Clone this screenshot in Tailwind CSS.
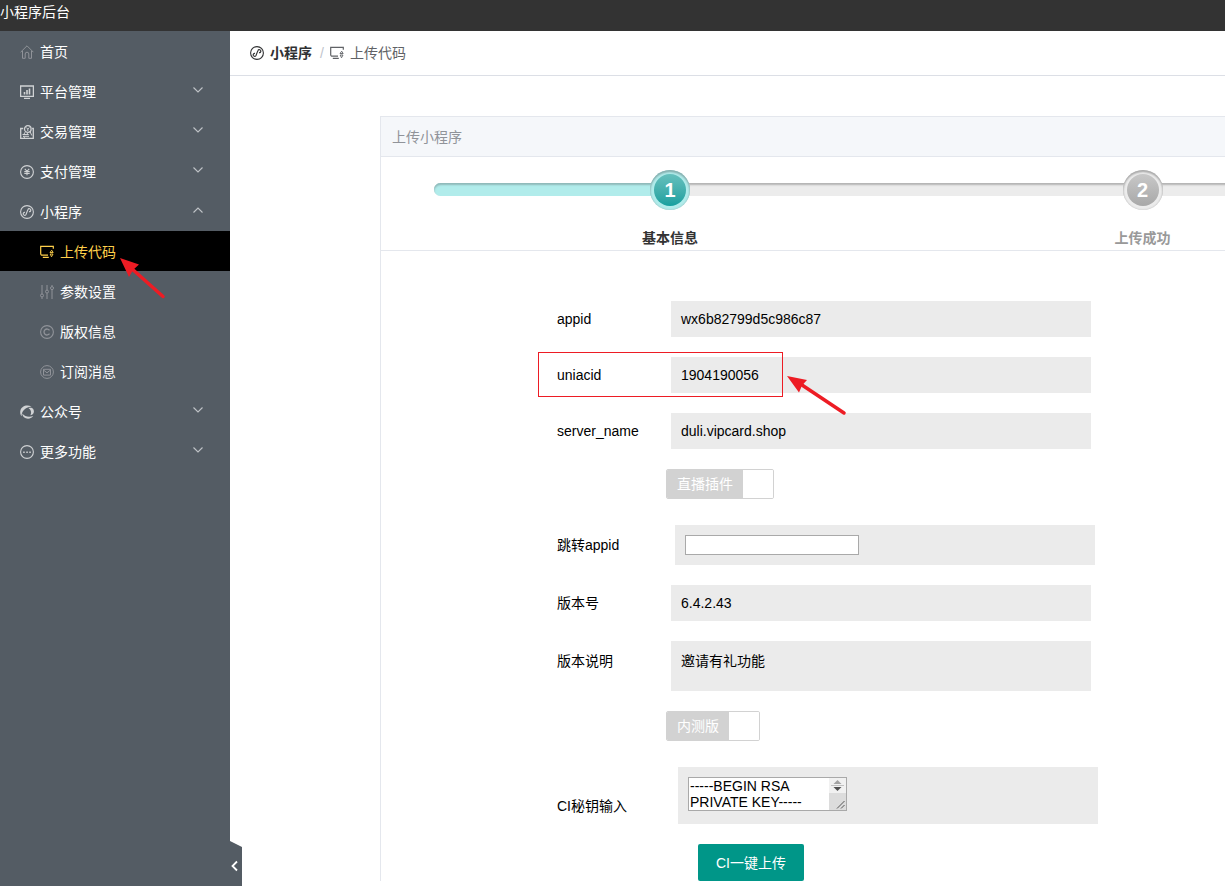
<!DOCTYPE html>
<html lang="zh-CN">
<head>
<meta charset="utf-8">
<meta name="viewport" content="width=device-width, initial-scale=1">
<title>小程序后台</title>
<script src="https://cdn.jsdelivr.net/npm/@tailwindcss/browser@4"></script>
</head>
<body class="relative flex h-screen flex-col overflow-hidden bg-white font-['Liberation_Sans','Noto_Sans_CJK_SC',sans-serif] text-sm leading-4 text-black">
<svg class="hidden" aria-hidden="true">
  <defs>
    <symbol id="home" viewBox="0 0 14 14"><path d="M.6 7.200 7 .8l6.400 6.400M2.500 6v7.300H5.200V9a1.800 1.800 0 0 1 3.600 0v4.300h2.700V6" fill="none" stroke="currentColor"/></symbol>
    <symbol id="chart" viewBox="0 0 14 14"><path d="M.6 1h12.800v10.400H.6zM4 13.300h6" fill="none" stroke="currentColor" stroke-width="1.300"/><path d="M4.500 9.500V7M7 9.500V5M9.500 9.500V3.500" stroke="currentColor" stroke-width="1.600"/></symbol>
    <symbol id="trade" viewBox="0 0 14 14"><path d="M3.200 3.500H.7v9.800h12.600V3.500h-1.200" fill="none" stroke="currentColor" stroke-width="1.300"/><circle cx="7.800" cy="4" r="3.300" fill="none" stroke="currentColor" stroke-width="1.300"/><path d="m6.300 2.500 1.500 1.600 1.500-1.600M7.800 4v2M10 6.500l1.800 4M5.300 7 4 9M2.500 9.500h6l-2-1.700M9 11.300H3l2 1.300" fill="none" stroke="currentColor"/></symbol>
    <symbol id="pay" viewBox="0 0 14 14"><circle cx="7" cy="7" r="6.400" fill="none" stroke="currentColor" stroke-width="1.100"/><path d="m4.800 3.900 2.200 2.400 2.200-2.400M4.300 6.500h5.400M4.300 8.400h5.400M7 6.300v4" fill="none" stroke="currentColor" stroke-width="1.100"/></symbol>
    <symbol id="mini" viewBox="0 0 14 14"><circle cx="7" cy="7" r="6.400" fill="none" stroke="currentColor" stroke-width="1.100"/><path d="M5 7.400A1.500 1.500 0 1 0 6.100 9.300C6.500 8 7.300 6.200 7.900 4.700A1.500 1.500 0 1 1 9 6.600" fill="none" stroke="currentColor" stroke-width="1.100"/></symbol>
    <symbol id="upload" viewBox="0 0 14 14"><path d="M8 10.200H2.200A1.400 1.400 0 0 1 .7 8.800V1.300h12.600v2.500M2.800 12.400h6" fill="none" stroke="currentColor" stroke-width="1.200"/><path d="M11.700 5.200 10 7.500h3.200zM10.200 9h2.800l-1.500 2.800z" fill="none" stroke="currentColor" stroke-width=".9"/></symbol>
    <symbol id="sliders" viewBox="0 0 14 14"><path d="M2 0v9M2 12.200V14M7 0v5M7 8.200V14M12 0v1.500M12 4.700V14" stroke="currentColor"/><g fill="none" stroke="currentColor"><circle cx="2" cy="10.500" r="1.500"/><circle cx="7" cy="6.600" r="1.500"/><circle cx="12" cy="3.100" r="1.500"/></g></symbol>
    <symbol id="copy" viewBox="0 0 14 14"><circle cx="7" cy="7" r="6.400" fill="none" stroke="currentColor" stroke-width="1.100"/><path d="M9.500 5.300a3 3 0 1 0 0 3.400" fill="none" stroke="currentColor" stroke-width="1.300"/></symbol>
    <symbol id="mail" viewBox="0 0 14 14"><circle cx="7" cy="7" r="6.400" fill="none" stroke="currentColor"/><path d="M3.500 4.300h7v5.800h-7zM3.500 5 7 7.800 10.500 5" fill="none" stroke="currentColor"/></symbol>
    <symbol id="swirl" viewBox="0 0 14 14"><g fill="currentColor"><path d="M11.500 1.600C7 -.8 1.200 1 .3 6c-.3 2 .2 3.800 1.300 5.200C1.700 6.500 4.500 2.800 11.500 1.600z"/><path d="M2.300 8.500c0 4.200 5 6.600 9 4.300.8-.5 1.400-1.100 1.900-1.800-4.500 1.500-8 .7-10.900-2.500z"/><path d="M8.500 3.200c2.500 1.300 3.300 4.300 1.900 7 3.300-.6 4.400-3.600 2.800-6.200-1-1.300-2.900-1.600-4.700-.8z"/></g></symbol>
    <symbol id="more" viewBox="0 0 14 14"><circle cx="7" cy="7" r="6.400" fill="none" stroke="currentColor" stroke-width="1.100"/><path d="M3.200 7.300h1.500M6.300 7.300h1.500M9.300 7.300h1.500" stroke="currentColor" stroke-width="1.400"/></symbol>
    <symbol id="down" viewBox="0 0 12 12"><path d="m1.500 3.500 4.500 4.500 4.500-4.500" fill="none" stroke="currentColor" stroke-width="1.100"/></symbol>
    <symbol id="up" viewBox="0 0 12 12"><path d="m1.500 8.500 4.500-4.500 4.500 4.500" fill="none" stroke="currentColor" stroke-width="1.100"/></symbol>
  </defs>
</svg>

<header class="flex h-[31px] shrink-0 items-start bg-[#333] pt-1 text-white"><h1>小程序后台</h1></header>

<div class="flex min-h-0 flex-1">
  <nav class="relative w-[230px] shrink-0 bg-[#545c64] text-white" aria-label="主菜单">
    <ul>
      <li><a href="#" class="flex h-10 items-center gap-1.5 pt-0.5 pl-5"><svg class="size-3.5 text-[#909399]"><use href="#home"/></svg>首页</a></li>
      <li><a href="#" class="flex h-10 items-center gap-1.5 pt-0.5 pr-[26px] pl-5"><svg class="size-3.5 text-[#d0d2d4]"><use href="#chart"/></svg>平台管理<svg class="mb-1 ml-auto size-3 text-[#c0c4c8]"><use href="#down"/></svg></a></li>
      <li><a href="#" class="flex h-10 items-center gap-1.5 pt-0.5 pr-[26px] pl-5"><svg class="size-3.5 text-[#d0d2d4]"><use href="#trade"/></svg>交易管理<svg class="mb-1 ml-auto size-3 text-[#c0c4c8]"><use href="#down"/></svg></a></li>
      <li><a href="#" class="flex h-10 items-center gap-1.5 pt-0.5 pr-[26px] pl-5"><svg class="size-3.5 text-[#d0d2d4]"><use href="#pay"/></svg>支付管理<svg class="mb-1 ml-auto size-3 text-[#c0c4c8]"><use href="#down"/></svg></a></li>
      <li><a href="#" class="flex h-10 items-center gap-1.5 pt-0.5 pr-[26px] pl-5"><svg class="size-3.5 text-[#d0d2d4]"><use href="#mini"/></svg>小程序<svg class="mb-1 ml-auto size-3 text-[#c0c4c8]"><use href="#up"/></svg></a>
        <ul>
          <li><a href="#" aria-current="page" class="flex h-10 items-center gap-1.5 bg-black pt-0.5 pl-10 text-[#ffd04b]"><svg class="size-3.5"><use href="#upload"/></svg>上传代码</a></li>
          <li><a href="#" class="flex h-10 items-center gap-1.5 pt-0.5 pl-10"><svg class="size-3.5 text-[#909399]"><use href="#sliders"/></svg>参数设置</a></li>
          <li><a href="#" class="flex h-10 items-center gap-1.5 pt-0.5 pl-10"><svg class="size-3.5 text-[#909399]"><use href="#copy"/></svg>版权信息</a></li>
          <li><a href="#" class="flex h-10 items-center gap-1.5 pt-0.5 pl-10"><svg class="size-3.5 text-[#909399]"><use href="#mail"/></svg>订阅消息</a></li>
        </ul>
      </li>
      <li><a href="#" class="flex h-10 items-center gap-1.5 pt-0.5 pr-[26px] pl-5"><svg class="size-3.5 text-[#d0d2d4]"><use href="#swirl"/></svg>公众号<svg class="mb-1 ml-auto size-3 text-[#c0c4c8]"><use href="#down"/></svg></a></li>
      <li><a href="#" class="flex h-10 items-center gap-1.5 pt-0.5 pr-[26px] pl-5"><svg class="size-3.5 text-[#d0d2d4]"><use href="#more"/></svg>更多功能<svg class="mb-1 ml-auto size-3 text-[#c0c4c8]"><use href="#down"/></svg></a></li>
    </ul>
    <button type="button" aria-label="收起菜单" class="absolute bottom-0 left-full flex h-[45px] w-3 items-center bg-[#545c64] pt-1 [clip-path:polygon(0_0,100%_6px,100%_100%,0_100%)]"><svg class="h-3 w-2" viewBox="0 0 8 12"><path d="M7 1.500 2.500 6 7 10.500" fill="none" stroke="#fff" stroke-width="1.800"/></svg></button>
  </nav>

  <main class="min-w-0 flex-1">
    <nav aria-label="面包屑" class="flex h-[45px] items-center border-b border-[#dcdfe6] pl-5 text-[#606266]">
      <a href="#" class="flex items-center gap-1.5 font-bold text-[#303133]"><svg class="size-3.5"><use href="#mini"/></svg>小程序</a>
      <span class="pr-1.5 pl-2 text-[#c0c4cc]">/</span>
      <span class="flex items-center gap-1.5"><svg class="size-3.5"><use href="#upload"/></svg>上传代码</span>
    </nav>

    <section class="mt-10 ml-[150px] overflow-hidden border-t border-l border-[#e4e7ed]">
      <h2 class="flex h-10 items-center border-b border-[#e4e7ed] bg-[#f5f7fa] pl-[11px] text-[#909399]">上传小程序</h2>
      <div class="h-[94px] border-b border-[#e4e7ed] pt-[13px] pl-[53px]">
        <ol class="relative flex w-[1892px] text-center font-bold">
          <li aria-hidden="true" class="absolute top-[13px] left-0 h-[13px] w-full rounded-full bg-[#ececec] shadow-[inset_0_2px_2px_#b4b4b4]"></li>
          <li class="relative w-[472px] shrink-0 text-[#333]">
            <div class="absolute top-[13px] left-0 h-[13px] w-1/2 rounded-l-full bg-[#b1eceb] shadow-[inset_0_2px_2px_#8fb9b9]"></div>
            <span class="relative mx-auto flex size-10 items-center justify-center rounded-full bg-[#b1eceb] shadow-[inset_0_2px_2px_#86aeae,inset_0_0_2px_#8fb9b9]"><span class="flex size-8 items-center justify-center rounded-full bg-linear-to-b from-[#65c0bd] to-[#14a09f] text-xl text-white">1</span></span>
            <p class="mt-5">基本信息</p>
          </li>
          <li class="relative w-[473px] shrink-0 text-[#999]">
            <span class="relative mx-auto flex size-10 items-center justify-center rounded-full bg-[#ececec] shadow-[inset_0_2px_2px_#aaa,inset_0_0_2px_#bbb]"><span class="flex size-8 items-center justify-center rounded-full bg-linear-to-b from-[#c8c8c8] to-[#a8a8a8] text-xl text-white">2</span></span>
            <p class="mt-5">上传成功</p>
          </li>
        </ol>
      </div>

      <form class="flex flex-col gap-5 pt-[50px] pl-44">
        <dl class="contents">
          <div class="flex items-start"><dt class="w-[114px] shrink-0 py-2.5">appid</dt><dd class="w-[420px] bg-[#ebebeb] p-2.5">wx6b82799d5c986c87</dd></div>
          <div class="flex items-start"><dt class="w-[114px] shrink-0 py-2.5">uniacid</dt><dd class="w-[420px] bg-[#ebebeb] p-2.5">1904190056</dd></div>
          <div class="flex items-start"><dt class="w-[114px] shrink-0 py-2.5">server_name</dt><dd class="w-[420px] bg-[#ebebeb] p-2.5">duli.vipcard.shop</dd></div>
        </dl>
        <div class="h-9 pl-[109px]">
          <button type="button" role="switch" aria-checked="false" class="flex h-[30px] items-stretch overflow-hidden rounded-xs border border-[#d2d2d2] text-white"><span class="flex items-center bg-[#d2d2d2] px-2.5">直播插件</span><span class="w-[30px] bg-white"></span></button>
        </div>
        <div class="flex items-center"><label for="jump" class="w-[118px] shrink-0">跳转appid</label><div class="w-[420px] bg-[#ebebeb] p-2.5"><input id="jump" type="text" class="block h-5 w-[174px] border border-[#a9a9a9] bg-white px-px"></div></div>
        <dl class="contents">
          <div class="flex items-start"><dt class="w-[114px] shrink-0 py-2.5">版本号</dt><dd class="w-[420px] bg-[#ebebeb] p-2.5">6.4.2.43</dd></div>
          <div class="flex items-start leading-5"><dt class="w-[114px] shrink-0 py-2.5">版本说明</dt><dd class="h-[50px] w-[420px] bg-[#ebebeb] p-2.5">邀请有礼功能</dd></div>
        </dl>
        <div class="h-9 pl-[109px]">
          <button type="button" role="switch" aria-checked="false" class="flex h-[30px] items-stretch overflow-hidden rounded-xs border border-[#d2d2d2] text-white"><span class="flex items-center bg-[#d2d2d2] px-2.5">内测版</span><span class="w-[30px] bg-white"></span></button>
        </div>
        <div class="flex items-end"><label for="key" class="w-[121px] shrink-0 pb-2.5">CI秘钥输入</label>
          <div class="h-[57px] w-[420px] bg-[#ebebeb] p-2.5">
            <div class="relative w-[159px]">
              <textarea id="key" rows="2" class="block h-[34px] w-full resize-none overflow-hidden border border-[#a9a9a9] bg-white px-px">-----BEGIN RSA
PRIVATE KEY-----</textarea>
              <svg class="pointer-events-none absolute top-px right-px h-8 w-[17px]" viewBox="0 0 17 32" aria-hidden="true"><path d="M0 0h17v15H0z" fill="#f1f1f1"/><path d="M0 15h17v17H0z" fill="#dcdcdc"/><path d="M4.500 6h8l-4-4z" fill="#a3a3a3"/><path d="M2 7.500h13" stroke="#c1c1c1"/><path d="M4.500 9h8l-4 4z" fill="#505050"/><path d="m8 30.500 7.500-7.500M12 30.500l3.500-3.500" stroke="#555"/></svg>
            </div>
          </div>
        </div>
        <button type="submit" class="ml-[141px] h-[37px] w-[106px] rounded-xs bg-[#009688] text-white">CI一键上传</button>
      </form>
    </section>
  </main>
</div>

<!-- Annotations drawn over the page -->
<div class="pointer-events-none absolute top-[352px] left-[538px] h-[45px] w-[245px] border border-[#ed1c24]"></div>
<svg class="pointer-events-none absolute top-[257px] left-[119px] h-[42px] w-[48px]" viewBox="0 0 48 42" aria-hidden="true"><path d="M12 11 44 39.500" stroke="#ed1c24" stroke-width="3.500" stroke-linecap="round"/><path d="M1 1 20 7.500 14 13 10 20z" fill="#ed1c24"/></svg>
<svg class="pointer-events-none absolute top-[375px] left-[787px] h-[42px] w-[60px]" viewBox="0 0 60 42" aria-hidden="true"><path d="m12 8 45 30" stroke="#ed1c24" stroke-width="3.500" stroke-linecap="round"/><path d="M0 1 20 5 15 10.500 12 17.500z" fill="#ed1c24"/></svg>
</body>
</html>
